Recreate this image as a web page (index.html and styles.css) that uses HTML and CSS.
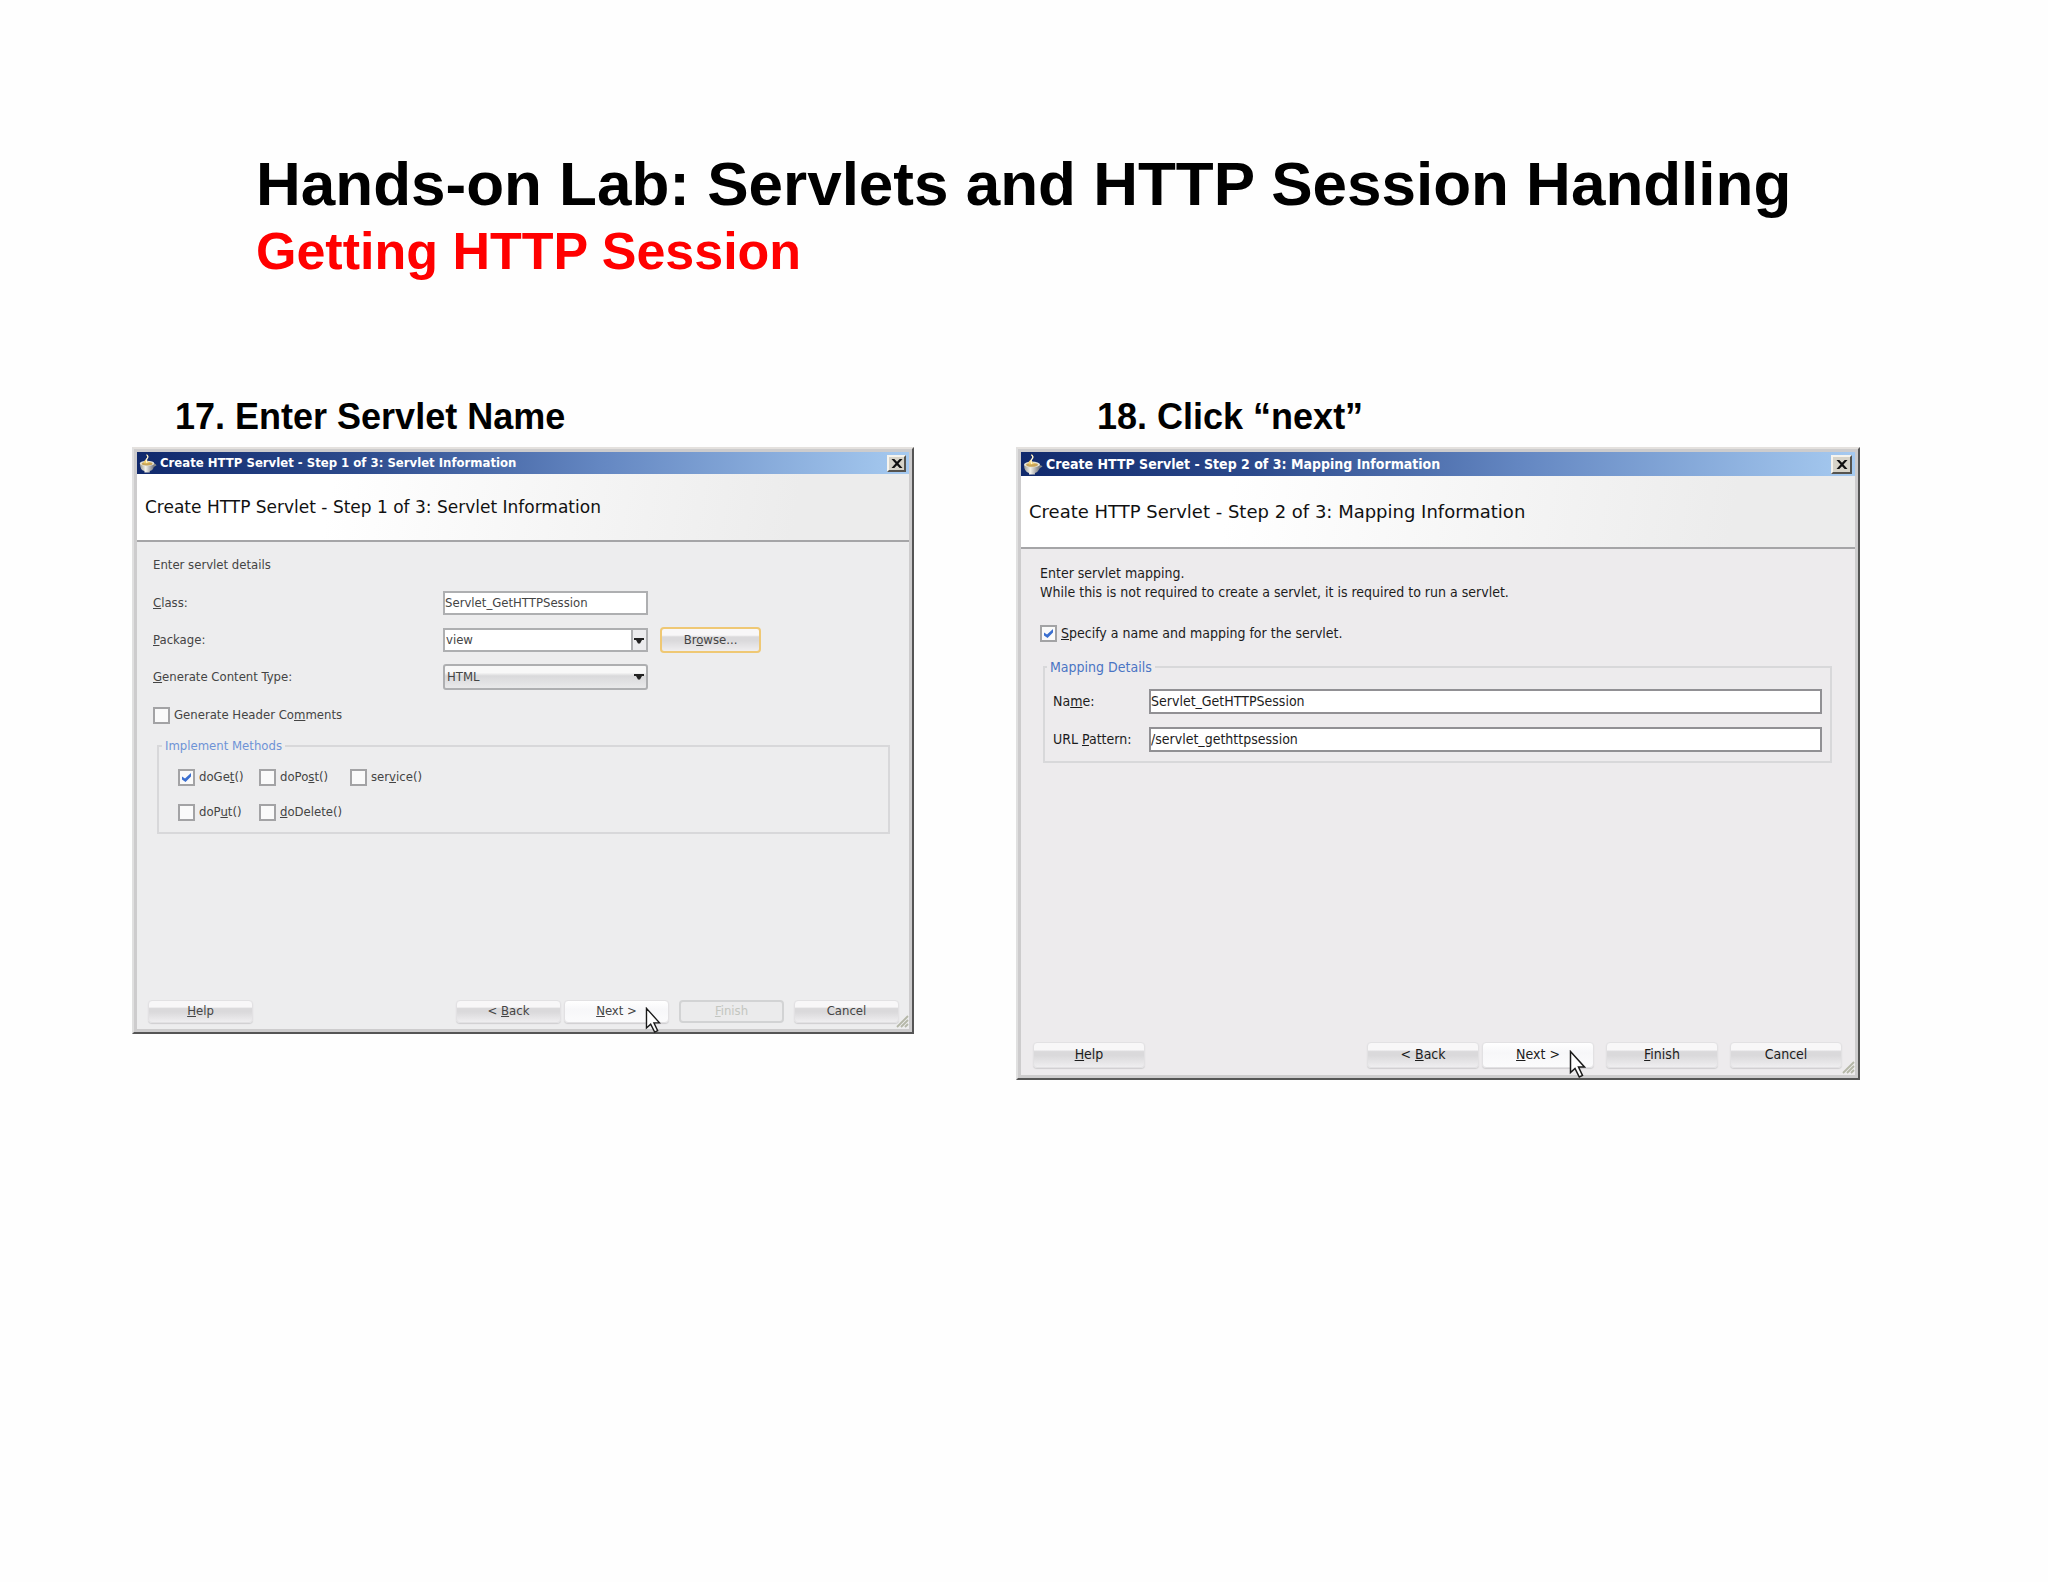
FILE: index.html
```html
<!DOCTYPE html>
<html lang="en">
<head>
<meta charset="utf-8">
<title>Hands-on Lab: Servlets and HTTP Session Handling</title>
<link rel="stylesheet" href="styles.css">
</head>
<body>
<svg class="defs" aria-hidden="true">
  <defs>
    <linearGradient id="bowl" x1="0" x2="1" y1="0" y2="0">
      <stop offset="0" stop-color="#9a9a92"/><stop offset=".4" stop-color="#f4f3ec"/><stop offset="1" stop-color="#6e7078"/>
    </linearGradient>
    <symbol id="cup" viewBox="0 0 20 22">
      <path d="M14.500 12q4-.5 5 1.500l-5 3z" fill="#8b8c86"/>
      <path d="M1 11.500q0 7 5 8.500v1.500h6V20q5-1.500 5-8.500z" fill="url(#bowl)"/>
      <ellipse cx="9" cy="11.500" rx="8" ry="3" fill="#e3e1d6"/>
      <ellipse cx="9" cy="11.800" rx="6" ry="1.900" fill="#c9a558"/>
      <path d="M8 1q4 2 1.500 4.500T12 11L6 11.500Q4.500 9 7.500 7T8 1z" fill="#f3cf6c"/>
      <path d="M8.500 2q2.500 2 .5 4T9 11" fill="none" stroke="#fff8dc" stroke-width="1.200"/>
    </symbol>
    <symbol id="cross" viewBox="0 0 12 9">
      <path d="M.5 0h2.800L6 2.800 8.700 0h2.800L7.500 4.500l4 4.500H8.700L6 6.200 3.300 9H.5l4-4.500z" fill="#111"/>
    </symbol>
    <symbol id="arrow" viewBox="0 0 10 6">
      <path d="M0 0h10v2H8L6 5.500H4L2 2H0z" fill="#222"/>
    </symbol>
    <symbol id="pointer" viewBox="0 0 17 29">
      <path d="M1.500 1.500v21l4.500-4 4.300 8.500 3.200-1.500-4-8.500h6z" fill="#fff" stroke="#1a1a1a" stroke-width="1.500"/>
    </symbol>
    <symbol id="grip" viewBox="0 0 13 13">
      <path d="M1 12 12 1M5 12l7-7M9 12l3-3" fill="none" stroke="#b5b7a8" stroke-width="1.800"/>
    </symbol>
  </defs>
</svg>

<main class="slide">
  <header class="slide-head">
    <h1>Hands-on Lab: Servlets and HTTP Session Handling</h1>
    <p class="subtitle">Getting HTTP Session</p>
  </header>

  <div class="steps">
    <section class="step">
      <h2>17. Enter Servlet Name</h2>
      <form class="dialog small">
        <div class="titlebar">
          <svg class="cup"><use href="#cup"/></svg>
          <span class="title">Create HTTP Servlet - Step 1 of 3: Servlet Information</span>
          <button type="button" class="close" aria-label="Close"><svg><use href="#cross"/></svg></button>
        </div>
        <h3>Create HTTP Servlet - Step 1 of 3: Servlet Information</h3>
        <div class="content">
          <p class="intro">Enter servlet details</p>
          <div class="rows">
            <div class="row">
              <label for="class"><u>C</u>lass:</label>
              <input class="field" id="class" type="text" value="Servlet_GetHTTPSession">
            </div>
            <div class="row">
              <label for="package"><u>P</u>ackage:</label>
              <span class="combo editable">
                <select class="field" id="package"><option>view</option></select>
                <svg><use href="#arrow"/></svg>
              </span>
              <button type="button" class="btn browse">Br<u>o</u>wse...</button>
            </div>
            <div class="row">
              <label for="type"><u>G</u>enerate Content Type:</label>
              <span class="combo">
                <select class="field" id="type"><option>HTML</option></select>
                <svg><use href="#arrow"/></svg>
              </span>
            </div>
          </div>
          <label class="check"><input type="checkbox"><span>Generate Header Co<u>m</u>ments</span></label>
          <fieldset class="methods">
            <legend>Implement Methods</legend>
            <label class="check"><input type="checkbox" checked><span>doGe<u>t</u>()</span></label>
            <label class="check"><input type="checkbox"><span>doPo<u>s</u>t()</span></label>
            <label class="check"><input type="checkbox"><span>ser<u>v</u>ice()</span></label>
            <label class="check"><input type="checkbox"><span>doP<u>u</u>t()</span></label>
            <label class="check"><input type="checkbox"><span><u>d</u>oDelete()</span></label>
          </fieldset>
        </div>
        <div class="buttons">
          <button type="button" class="btn help"><u>H</u>elp</button>
          <button type="button" class="btn">&lt; <u>B</u>ack</button>
          <button type="button" class="btn next"><u>N</u>ext &gt;<svg class="pointer"><use href="#pointer"/></svg></button>
          <button type="button" class="btn" disabled><u>F</u>inish</button>
          <button type="button" class="btn">Cancel</button>
        </div>
        <svg class="grip"><use href="#grip"/></svg>
      </form>
    </section>

    <section class="step second">
      <h2>18. Click “next”</h2>
      <form class="dialog">
        <div class="titlebar">
          <svg class="cup"><use href="#cup"/></svg>
          <span class="title">Create HTTP Servlet - Step 2 of 3: Mapping Information</span>
          <button type="button" class="close" aria-label="Close"><svg><use href="#cross"/></svg></button>
        </div>
        <h3>Create HTTP Servlet - Step 2 of 3: Mapping Information</h3>
        <div class="content">
          <p class="intro">Enter servlet mapping.<br>While this is not required to create a servlet, it is required to run a servlet.</p>
          <label class="check"><input type="checkbox" checked><span><u>S</u>pecify a name and mapping for the servlet.</span></label>
          <fieldset class="mapping">
            <legend>Mapping Details</legend>
            <div class="row">
              <label for="name">Na<u>m</u>e:</label>
              <input class="field" id="name" type="text" value="Servlet_GetHTTPSession">
            </div>
            <div class="row">
              <label for="pattern">URL <u>P</u>attern:</label>
              <input class="field" id="pattern" type="text" value="/servlet_gethttpsession">
            </div>
          </fieldset>
        </div>
        <div class="buttons">
          <button type="button" class="btn help"><u>H</u>elp</button>
          <button type="button" class="btn">&lt; <u>B</u>ack</button>
          <button type="button" class="btn next"><u>N</u>ext &gt;<svg class="pointer"><use href="#pointer"/></svg></button>
          <button type="button" class="btn"><u>F</u>inish</button>
          <button type="button" class="btn">Cancel</button>
        </div>
        <svg class="grip"><use href="#grip"/></svg>
      </form>
    </section>
  </div>
</main>
</body>
</html>
```

FILE: styles.css
```css
* { box-sizing: border-box; }

body {
  margin: 0;
  background: #fefefe;
  color: #000;
  font-family: "Liberation Sans", Arial, sans-serif;
}

.defs { position: absolute; width: 0; height: 0; }

/* Slide */
.slide { padding: 149px 188px 0 132px; }
.slide-head { padding-left: 124px; }
h1, h2, h3, p { margin: 0; }
h1 { font-size: 62px; line-height: 70px; white-space: nowrap; }
.subtitle { color: #f00; font-size: 52px; font-weight: bold; line-height: 64px; }

.steps {
  display: grid;
  grid-template-columns: 782fr 844fr;
  gap: 102px;
  align-items: start;
  margin-top: 104px;
}
h2 { padding-left: 43px; font-size: 36px; line-height: 60px; }
.second h2 { padding-left: 81px; }

/* Wizard dialog */
.dialog {
  --text: 14px;
  --row: 25px;
  --line: 19px;
  position: relative;
  display: flex;
  flex-direction: column;
  min-height: 633px;
  padding: 3px;
  border: 2px solid;
  border-color: #e4e1de #555 #555 #e0e0e0;
  background: #cdcccd;
  color: #1c1c1c;
  font-family: "DejaVu Sans Condensed", "DejaVu Sans", sans-serif;
  font-size: var(--text);
  line-height: var(--line);
}
.small {
  --text: 13px;
  --row: 26px;
  --line: 18px;
  min-height: 587px;
  color: #444;
}

.titlebar {
  display: flex;
  align-items: center;
  gap: 3px;
  height: 24px;
  padding: 0 3px 0 2px;
  background: linear-gradient(90deg, #10296c, #2c4a8c 28%, #6487c2 60%, #a6caf0);
  color: #fff;
  font-weight: bold;
}
.small .titlebar { height: 22px; }
.cup { width: 20px; height: 22px; }
.small .cup { width: 18px; height: 20px; }
.title { flex: 1; white-space: nowrap; }
.close {
  display: grid;
  place-items: center;
  width: 21px;
  height: 19px;
  padding: 0;
  border: 2px solid;
  border-color: #f6f4ee #55534e #55534e #f6f4ee;
  background: #d6d3c9;
}
.small .close { width: 19px; height: 17px; }
.close svg { width: 12px; height: 9px; }

h3 {
  padding: 1px 8px 0;
  border-bottom: 2px solid #a5a5a7;
  background: linear-gradient(100deg, #fff 25%, #ececec 85%);
  color: #111;
  font-family: "DejaVu Sans", sans-serif;
  font-size: 18px;
  font-weight: normal;
  line-height: 70px;
  white-space: nowrap;
}
.small h3 { font-size: 17px; line-height: 65px; }

.content { flex: 1; padding: 15px 23px 0 19px; background: #edebed; }
.small .content { padding: 14px 19px 0 16px; background: #ededee; }

.rows { display: grid; gap: 11px; margin-top: 16px; }
.row { display: flex; align-items: center; height: var(--row); }
.row label { flex: none; width: 96px; }
.small .row label { width: 290px; }

.field {
  flex: 1;
  width: 100%;
  min-width: 0;
  height: 25px;
  padding: 0 1px 1px 0;
  border: 2px solid #919094;
  border-radius: 0;
  background: #fff;
  color: inherit;
  font: inherit;
  appearance: none;
}
.small .field { height: 24px; border-color: #aeafb1; }
.small input.field, .combo { flex: 0 0 205px; }
.combo { position: relative; display: flex; }
.small .combo .field {
  height: 26px;
  padding: 0 2px;
  border-radius: 3px;
  background: linear-gradient(#f8f8f8 0 30%, #d9d9db 45%, #e9e9ea);
}
.small .editable .field {
  height: 24px;
  padding: 0 1px;
  border-radius: 0;
  background: linear-gradient(90deg, #fff 0 186px, #aeafb1 186px 188px, #ececee 188px);
}
.combo svg {
  position: absolute;
  top: 10px;
  right: 4px;
  width: 10px;
  height: 6px;
  pointer-events: none;
}

.check { display: flex; align-items: center; gap: 4px; height: 18px; margin-top: 22px; }
.small .check { margin-top: 16px; }
.check input {
  flex: none;
  width: 17px;
  height: 17px;
  margin: 0;
  border: 2px solid #a3a3a5;
  background: #fafafa;
  appearance: none;
}
.check input:checked {
  background: #fafafa url("data:image/svg+xml,%3Csvg xmlns='http://www.w3.org/2000/svg' viewBox='0 0 13 13'%3E%3Cpath d='M2 5.500 5 7.500 11 2v3.500L5.500 11 2 8.500z' fill='%233b6fd0'/%3E%3C/svg%3E");
}

fieldset { min-width: 0; margin: 16px 0 0 3px; border: 2px solid #d8d8da; }
legend { height: 18px; padding: 0 3px; color: #4a74c4; line-height: 18px; }
.mapping { display: grid; gap: 13px; padding: 13px 8px 9px; }
.mapping legend { margin-left: -6px; }
.methods {
  display: grid;
  grid-template-columns: 81px 91px 1fr;
  gap: 17px 0;
  margin: 13px 0 0 4px;
  padding: 13px 19px 11px;
}
.small .methods legend { margin-left: -16px; color: #6d93d6; }
.small .methods .check { margin: 0; }

/* Buttons */
.btn {
  width: 112px;
  height: 26px;
  padding: 0 0 1px;
  border: 1px solid #e2e1e3;
  border-radius: 4px;
  background: linear-gradient(#f8f7f8 0 28%, #dad9db 36% 52%, #efeef0);
  box-shadow: 0 1px 1px #cfced0;
  color: inherit;
  font: inherit;
}
.small .btn { width: 105px; height: 23px; }
.small .browse {
  width: 101px;
  height: 26px;
  margin-left: 12px;
  border: 2px solid #efc874;
  box-shadow: none;
}
.buttons {
  display: flex;
  gap: 12px;
  padding: 0 13px 7px 12px;
  background: #edebed;
}
.small .buttons { gap: 10px; padding: 0 10px 6px 11px; background: #ededee; }
.help { margin-right: auto; }
.buttons .next {
  position: relative;
  margin-left: -9px;
  background: linear-gradient(#fff, #f7f7f9 40%, #fbfbfc);
}
.small .buttons .next { margin-left: -7px; }
.btn:disabled { border: 2px solid #d2d3d4; background: #ebebec; box-shadow: none; color: #c3c6c0; }

.pointer { position: absolute; top: 7px; right: 7px; width: 17px; height: 29px; }
.small .pointer { top: 6px; right: 7px; width: 16px; height: 27px; }
.grip { position: absolute; right: 3px; bottom: 4px; width: 13px; height: 13px; }
```
